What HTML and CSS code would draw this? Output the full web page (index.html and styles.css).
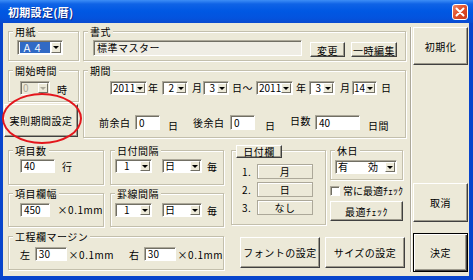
FILE: index.html
```html
<!DOCTYPE html>
<html lang="ja">
<head>
  <meta charset="UTF-8">
  <title>初期設定(暦)</title>
  <link rel="stylesheet" href="styles.css">
</head>
<body>
  <div class="window">
    <div class="titlebar">
      <span class="title">初期設定(暦)</span>
      <span class="close">
        <svg width="14" height="14" viewBox="0 0 14 14"><path d="M3.5 3.5l7 7M10.5 3.5l-7 7" stroke="#fff" stroke-width="2" stroke-linecap="round"/></svg>
      </span>
    </div>
    <div class="client">
      <div class="main">
        <!-- 用紙・書式 -->
        <div class="row top-row">
          <div class="group paper-group">
            <div class="legend">用紙</div>
            <div class="combo paper-combo"><span class="combo-value selected">Ａ４</span><span class="drop"></span></div>
          </div>
          <div class="group format-group">
            <div class="legend">書式</div>
            <div class="line format-line">
              <div class="edit locked format-edit">標準マスター</div>
              <button class="btn change-btn">変更</button>
              <button class="btn temp-btn">一時編集</button>
            </div>
          </div>
        </div>

        <!-- 開始時間・期間 -->
        <div class="row mid-row">
          <div class="start-col">
            <div class="group start-group">
              <div class="legend">開始時間</div>
              <div class="line start-line">
                <div class="combo disabled hour-combo"><span class="combo-value">0</span><span class="drop"></span></div>
                <span class="unit hour-unit">時</span>
              </div>
            </div>
            <button class="btn term-btn">実則期間設定</button>
          </div>
          <div class="group term-group">
            <div class="legend">期間</div>
            <div class="line date-line">
              <div class="combo year-combo"><span class="combo-value">2011</span><span class="drop"></span></div>
              <span class="unit u-year">年</span>
              <div class="combo small-combo"><span class="combo-value num">2</span><span class="drop"></span></div>
              <span class="unit u-month">月</span>
              <div class="combo small-combo"><span class="combo-value num">3</span><span class="drop"></span></div>
              <span class="unit u-tilde">日～</span>
              <div class="combo year-combo"><span class="combo-value">2011</span><span class="drop"></span></div>
              <span class="unit u-year2">年</span>
              <div class="combo small-combo"><span class="combo-value num">3</span><span class="drop"></span></div>
              <span class="unit u-month2">月</span>
              <div class="combo day-combo"><span class="combo-value">14</span><span class="drop"></span></div>
              <span class="unit u-day2">日</span>
            </div>
            <div class="line margin-line">
              <span class="unit l-before">前余白</span>
              <div class="edit short-edit">0</div>
              <span class="unit low u-after1">日</span>
              <span class="unit l-after">後余白</span>
              <div class="edit short-edit">0</div>
              <span class="unit low u-after2">日</span>
              <span class="unit l-days">日数</span>
              <div class="edit days-edit">40</div>
              <span class="unit low u-daysunit">日間</span>
            </div>
          </div>
        </div>

        <!-- 下段 -->
        <div class="row bottom-row">
          <div class="left-block">
            <div class="row">
              <div class="group count-group">
                <div class="legend">項目数</div>
                <div class="line count-line">
                  <div class="edit num-edit">40</div>
                  <span class="unit low u-row">行</span>
                </div>
              </div>
              <div class="group interval-group">
                <div class="legend">日付間隔</div>
                <div class="line interval-line">
                  <div class="combo n-combo"><span class="combo-value">1</span><span class="drop"></span></div>
                  <div class="combo kind-combo"><span class="combo-value">日</span><span class="drop"></span></div>
                  <span class="unit low u-every">毎</span>
                </div>
              </div>
            </div>
            <div class="row second-row">
              <div class="group count-group">
                <div class="legend">項目欄幅</div>
                <div class="line width-line">
                  <div class="edit num-edit">450</div>
                  <span class="unit u-mm">×0.1mm</span>
                </div>
              </div>
              <div class="group interval-group">
                <div class="legend">罫線間隔</div>
                <div class="line interval-line rule-line">
                  <div class="combo n-combo"><span class="combo-value">1</span><span class="drop"></span></div>
                  <div class="combo kind-combo"><span class="combo-value">日</span><span class="drop"></span></div>
                  <span class="unit low u-every">毎</span>
                </div>
              </div>
            </div>
            <div class="group process-group">
              <div class="legend">工程欄マージン</div>
              <div class="line process-line">
                <span class="unit low u-side">左</span>
                <div class="edit margin-edit">30</div>
                <span class="unit low u-mm2">×0.1mm</span>
                <span class="unit low u-side">右</span>
                <div class="edit margin-edit">30</div>
                <span class="unit low u-mm3">×0.1mm</span>
              </div>
            </div>
          </div>

          <div class="right-block">
            <div class="row">
              <div class="group dcol-group">
                <button class="btn legend-btn">日付欄</button>
                <div class="slot-row first-slot"><span class="slot-no">1.</span><span class="slot">月</span></div>
                <div class="slot-row"><span class="slot-no">2.</span><span class="slot">日</span></div>
                <div class="slot-row"><span class="slot-no">3.</span><span class="slot">なし</span></div>
              </div>
              <div class="holiday-col">
                <div class="group holiday-group">
                  <div class="legend">休日</div>
                  <div class="combo holiday-combo"><span class="combo-value">有　　効</span><span class="drop"></span></div>
                </div>
                <label class="check-line"><span class="check"></span><span class="check-text">常に最適ﾁｪｯｸ</span></label>
                <button class="btn opt-btn">最適ﾁｪｯｸ</button>
              </div>
            </div>
            <div class="row font-row">
              <button class="btn font-btn">フォントの設定</button>
              <button class="btn size-btn">サイズの設定</button>
            </div>
          </div>
        </div>
      </div>

      <div class="side">
        <button class="btn init-btn">初期化</button>
        <button class="btn cancel-btn">取消</button>
        <button class="btn ok-btn">決定</button>
      </div>
    </div>

    <!-- 注釈の赤丸 -->
    <div class="mark"></div>
  </div>
</body>
</html>
```

FILE: styles.css
```css
* {
  box-sizing: border-box;
}
body {
  margin: 0;
  background: #fff;
  font-family: "Noto Sans CJK JP", "DejaVu Sans", sans-serif;
  font-size: 10px;
  letter-spacing: 0.5px;
  color: #000;
}
/* ウィンドウ枠 */
.window {
  position: relative;
  width: 473px;
  height: 280px;
  display: flex;
  flex-direction: column;
  background: #0845cc;
}
.titlebar {
  flex: none;
  height: 23px;
  display: flex;
  align-items: center;
  justify-content: space-between;
  padding: 0 5px 0 8px;
  background: linear-gradient(to bottom, #3d8ef6 0, #0f63e6 4px, #0058e3 11px, #0353de 18px, #0a4bcf 23px);
}
.title {
  color: #fff;
  font-size: 11px;
  font-weight: bold;
  letter-spacing: 0.3px;
  text-shadow: 1px 1px 0 #0a2a8a;
}
.close {
  width: 16px;
  height: 16px;
  margin-top: 1px;
  display: flex;
  align-items: center;
  justify-content: center;
  border: 1px solid #fff;
  border-radius: 3px;
  background: linear-gradient(135deg, #f0896a 0, #e2502a 45%, #c8391a 100%);
}
.client {
  flex: 1;
  display: flex;
  margin: 0 4px 4px 3px;
  background: #ece9d8;
}
.main {
  width: 405px;
  padding: 8px 2px 0 5px;
}
.row {
  display: flex;
}
.line {
  display: flex;
  align-items: center;
}
/* グループ枠 */
.group {
  border: 1px solid #c3bfac;
  box-shadow: inset 1px 1px 0 #fff, 1px 1px 0 #fff;
}
.legend {
  width: fit-content;
  height: 13px;
  margin: -7px 0 0 4px;
  padding: 0 2px;
  line-height: 13px;
  background: #ece9d8;
}
.unit {
  line-height: 12px;
  white-space: nowrap;
}
.low {
  align-self: flex-end;
}
/* コンボボックス */
.combo {
  display: flex;
  height: 14px;
  background: #fff;
  border: 1px solid;
  border-color: #aca899 #fff #fff #aca899;
  box-shadow: inset 1px 1px 0 #716f64;
}
.combo-value {
  flex: 1;
  padding-left: 2px;
  line-height: 12px;
  letter-spacing: 0;
  white-space: nowrap;
}
.combo-value.num {
  text-align: right;
  padding-right: 2px;
}
.combo-value.selected {
  margin: 1px 1px 1px 2px;
  padding-left: 2px;
  line-height: 11px;
  letter-spacing: 0.5px;
  background: #316ac5;
  color: #fff;
}
.drop {
  flex: none;
  width: 10px;
  margin: 1px 1px 1px 0;
  display: flex;
  align-items: center;
  justify-content: center;
  background: #ece9d8;
  border: 1px solid;
  border-color: #fff #716f64 #716f64 #fff;
}
.drop::after {
  content: "";
  border-left: 3px solid transparent;
  border-right: 3px solid transparent;
  border-top: 3px solid #000;
}
.combo.disabled {
  background: #ece9d8;
  color: #aca899;
}
.combo.disabled .drop::after {
  border-top-color: #aca899;
}
/* テキスト入力 */
.edit {
  height: 15px;
  padding-left: 3px;
  line-height: 13px;
  letter-spacing: 0;
  background: #fff;
  border: 1px solid;
  border-color: #aca899 #fff #fff #aca899;
  box-shadow: inset 1px 1px 0 #716f64;
  white-space: nowrap;
}
.edit.locked {
  letter-spacing: 0.5px;
  background: #efede4;
}
/* ボタン */
.btn {
  padding: 0;
  font: inherit;
  letter-spacing: 0.5px;
  color: #000;
  background: #ece9d8;
  border: 1px solid;
  border-color: #fff #404040 #404040 #fff;
  box-shadow: inset -1px -1px 0 #9d9a8c;
}

/* 上段 */
.paper-group {
  width: 71px;
  height: 30px;
}
.paper-combo {
  width: 46px;
  height: 15px;
  margin: 2px 0 0 8px;
}
.format-group {
  width: 323px;
  height: 30px;
  margin-left: 4px;
}
.format-line {
  align-items: flex-start;
  margin: 2px 0 0 9px;
}
.format-edit {
  width: 209px;
  height: 16px;
  line-height: 14px;
}
.change-btn {
  width: 35px;
  height: 15px;
  margin: 2px 0 0 8px;
}
.temp-btn {
  width: 46px;
  height: 15px;
  margin: 2px 0 0 6px;
}

/* 中段 */
.mid-row {
  margin-top: 9px;
}
.start-col {
  width: 71px;
}
.start-group {
  height: 32px;
}
.start-line {
  margin: 4px 0 0 11px;
  align-items: flex-end;
}
.hour-combo {
  width: 30px;
}
.hour-unit {
  margin: 0 0 -1px 7px;
}
.term-btn {
  width: 74px;
  height: 33px;
  margin: 2px 0 0 -4px;
}
.term-group {
  width: 323px;
  height: 68px;
  margin-left: 4px;
}
.date-line {
  margin: 4px 0 0 26px;
}
.year-combo {
  width: 37px;
}
.small-combo {
  width: 26px;
}
.day-combo {
  width: 25px;
}
.day-combo .combo-value {
  padding-left: 1px;
}
.u-year {
  width: 15px;
  padding-left: 1px;
}
.u-month {
  width: 15px;
  padding-left: 4px;
}
.u-tilde {
  width: 27px;
  padding-left: 3px;
}
.u-year2 {
  width: 16px;
  padding-left: 3px;
}
.u-month2 {
  width: 17px;
  padding-left: 5px;
}
.u-day2 {
  padding-left: 4px;
}
.margin-line {
  height: 15px;
  margin: 20px 0 0 15px;
}
.l-before {
  width: 36px;
}
.short-edit {
  width: 25px;
}
.u-after1 {
  width: 33px;
  padding-left: 8px;
  margin-bottom: -2px;
}
.l-after {
  width: 37px;
}
.u-after2 {
  width: 35px;
  padding-left: 10px;
  margin-bottom: -2px;
}
.l-days {
  width: 25px;
  margin-top: -3px;
}
.days-edit {
  width: 45px;
}
.u-daysunit {
  padding-left: 8px;
  margin-bottom: -2px;
}

/* 下段 */
.bottom-row {
  margin-top: 12px;
}
.left-block {
  width: 216px;
}
.count-group {
  width: 96px;
  height: 35px;
}
.second-row {
  margin-top: 8px;
}
.second-row .group {
  height: 34px;
}
.count-line {
  margin: 2px 0 0 11px;
}
.num-edit {
  width: 35px;
  height: 14px;
  line-height: 12px;
}
.u-row {
  margin-left: 7px;
}
.interval-group {
  width: 114px;
  height: 35px;
  margin-left: 6px;
}
.interval-line {
  margin: 2px 0 0 4px;
}
.rule-line {
  margin-top: 3px;
}
.n-combo {
  width: 37px;
}
.n-combo .combo-value {
  padding-left: 8px;
}
.kind-combo {
  width: 40px;
  margin-left: 10px;
}
.u-every {
  margin-left: 5px;
}
.width-line {
  margin: 3px 0 0 11px;
}
.u-mm {
  margin-left: 8px;
}
.process-group {
  width: 216px;
  height: 34px;
  margin-top: 9px;
}
.process-line {
  margin: 4px 0 0 11px;
}
.u-side {
  width: 15px;
}
.margin-edit {
  width: 32px;
  height: 14px;
  line-height: 12px;
}
.u-mm2 {
  width: 63px;
  padding-left: 2px;
}
.u-mm3 {
  padding-left: 2px;
}
.right-block {
  width: 175px;
  margin-left: 7px;
}
.dcol-group {
  width: 95px;
  height: 75px;
}
.legend-btn {
  display: block;
  width: 46px;
  height: 13px;
  margin: -6px 0 0 4px;
  line-height: 11px;
}
.slot-row {
  display: flex;
  align-items: center;
  margin: 3px 0 0 10px;
}
.first-slot {
  margin-top: 6px;
}
.slot-no {
  width: 15px;
}
.slot {
  width: 56px;
  height: 15px;
  line-height: 13px;
  text-align: center;
  border: 1px solid #aca899;
  box-shadow: inset 1px 1px 0 #fff;
}
.holiday-col {
  width: 73px;
  margin-left: 4px;
}
.holiday-group {
  height: 30px;
}
.holiday-combo {
  width: 62px;
  height: 14px;
  margin: 3px 0 0 4px;
}
.check-line {
  display: flex;
  align-items: center;
  margin-top: 5px;
}
.check {
  flex: none;
  width: 10px;
  height: 10px;
  background: #fff;
  border: 1px solid;
  border-color: #aca899 #fff #fff #aca899;
  box-shadow: inset 1px 1px 0 #716f64;
}
.check-text {
  margin-left: 3px;
  white-space: nowrap;
  line-height: 12px;
  letter-spacing: 0;
}
.opt-btn {
  width: 73px;
  height: 20px;
  margin-top: 4px;
}
.font-row {
  margin-top: 12px;
}
.font-btn {
  width: 80px;
  height: 31px;
  margin-left: 9px;
}
.size-btn {
  width: 80px;
  height: 31px;
  margin-left: 5px;
}

/* 右側のボタン列 */
.side {
  flex: 1;
  display: flex;
  flex-direction: column;
  margin: 4px 0 4px 2px;
  padding-left: 2px;
  border-left: 1px solid #aca899;
  box-shadow: inset 1px 0 0 #fff;
}
.init-btn {
  width: 55px;
  height: 38px;
}
.cancel-btn {
  width: 55px;
  height: 39px;
  margin-top: 118px;
}
.ok-btn {
  width: 55px;
  height: 39px;
  margin-top: 11px;
  border-color: #000;
  box-shadow: inset 1px 1px 0 #fff, inset -1px -1px 0 #404040, inset -2px -2px 0 #9d9a8c;
}

/* 赤丸の注釈（画面上に重ねる） */
.mark {
  position: absolute;
  left: 2px;
  top: 93px;
  width: 80px;
  height: 51px;
  border: 2px solid #e3161c;
  border-radius: 50%;
  pointer-events: none;
}
```
